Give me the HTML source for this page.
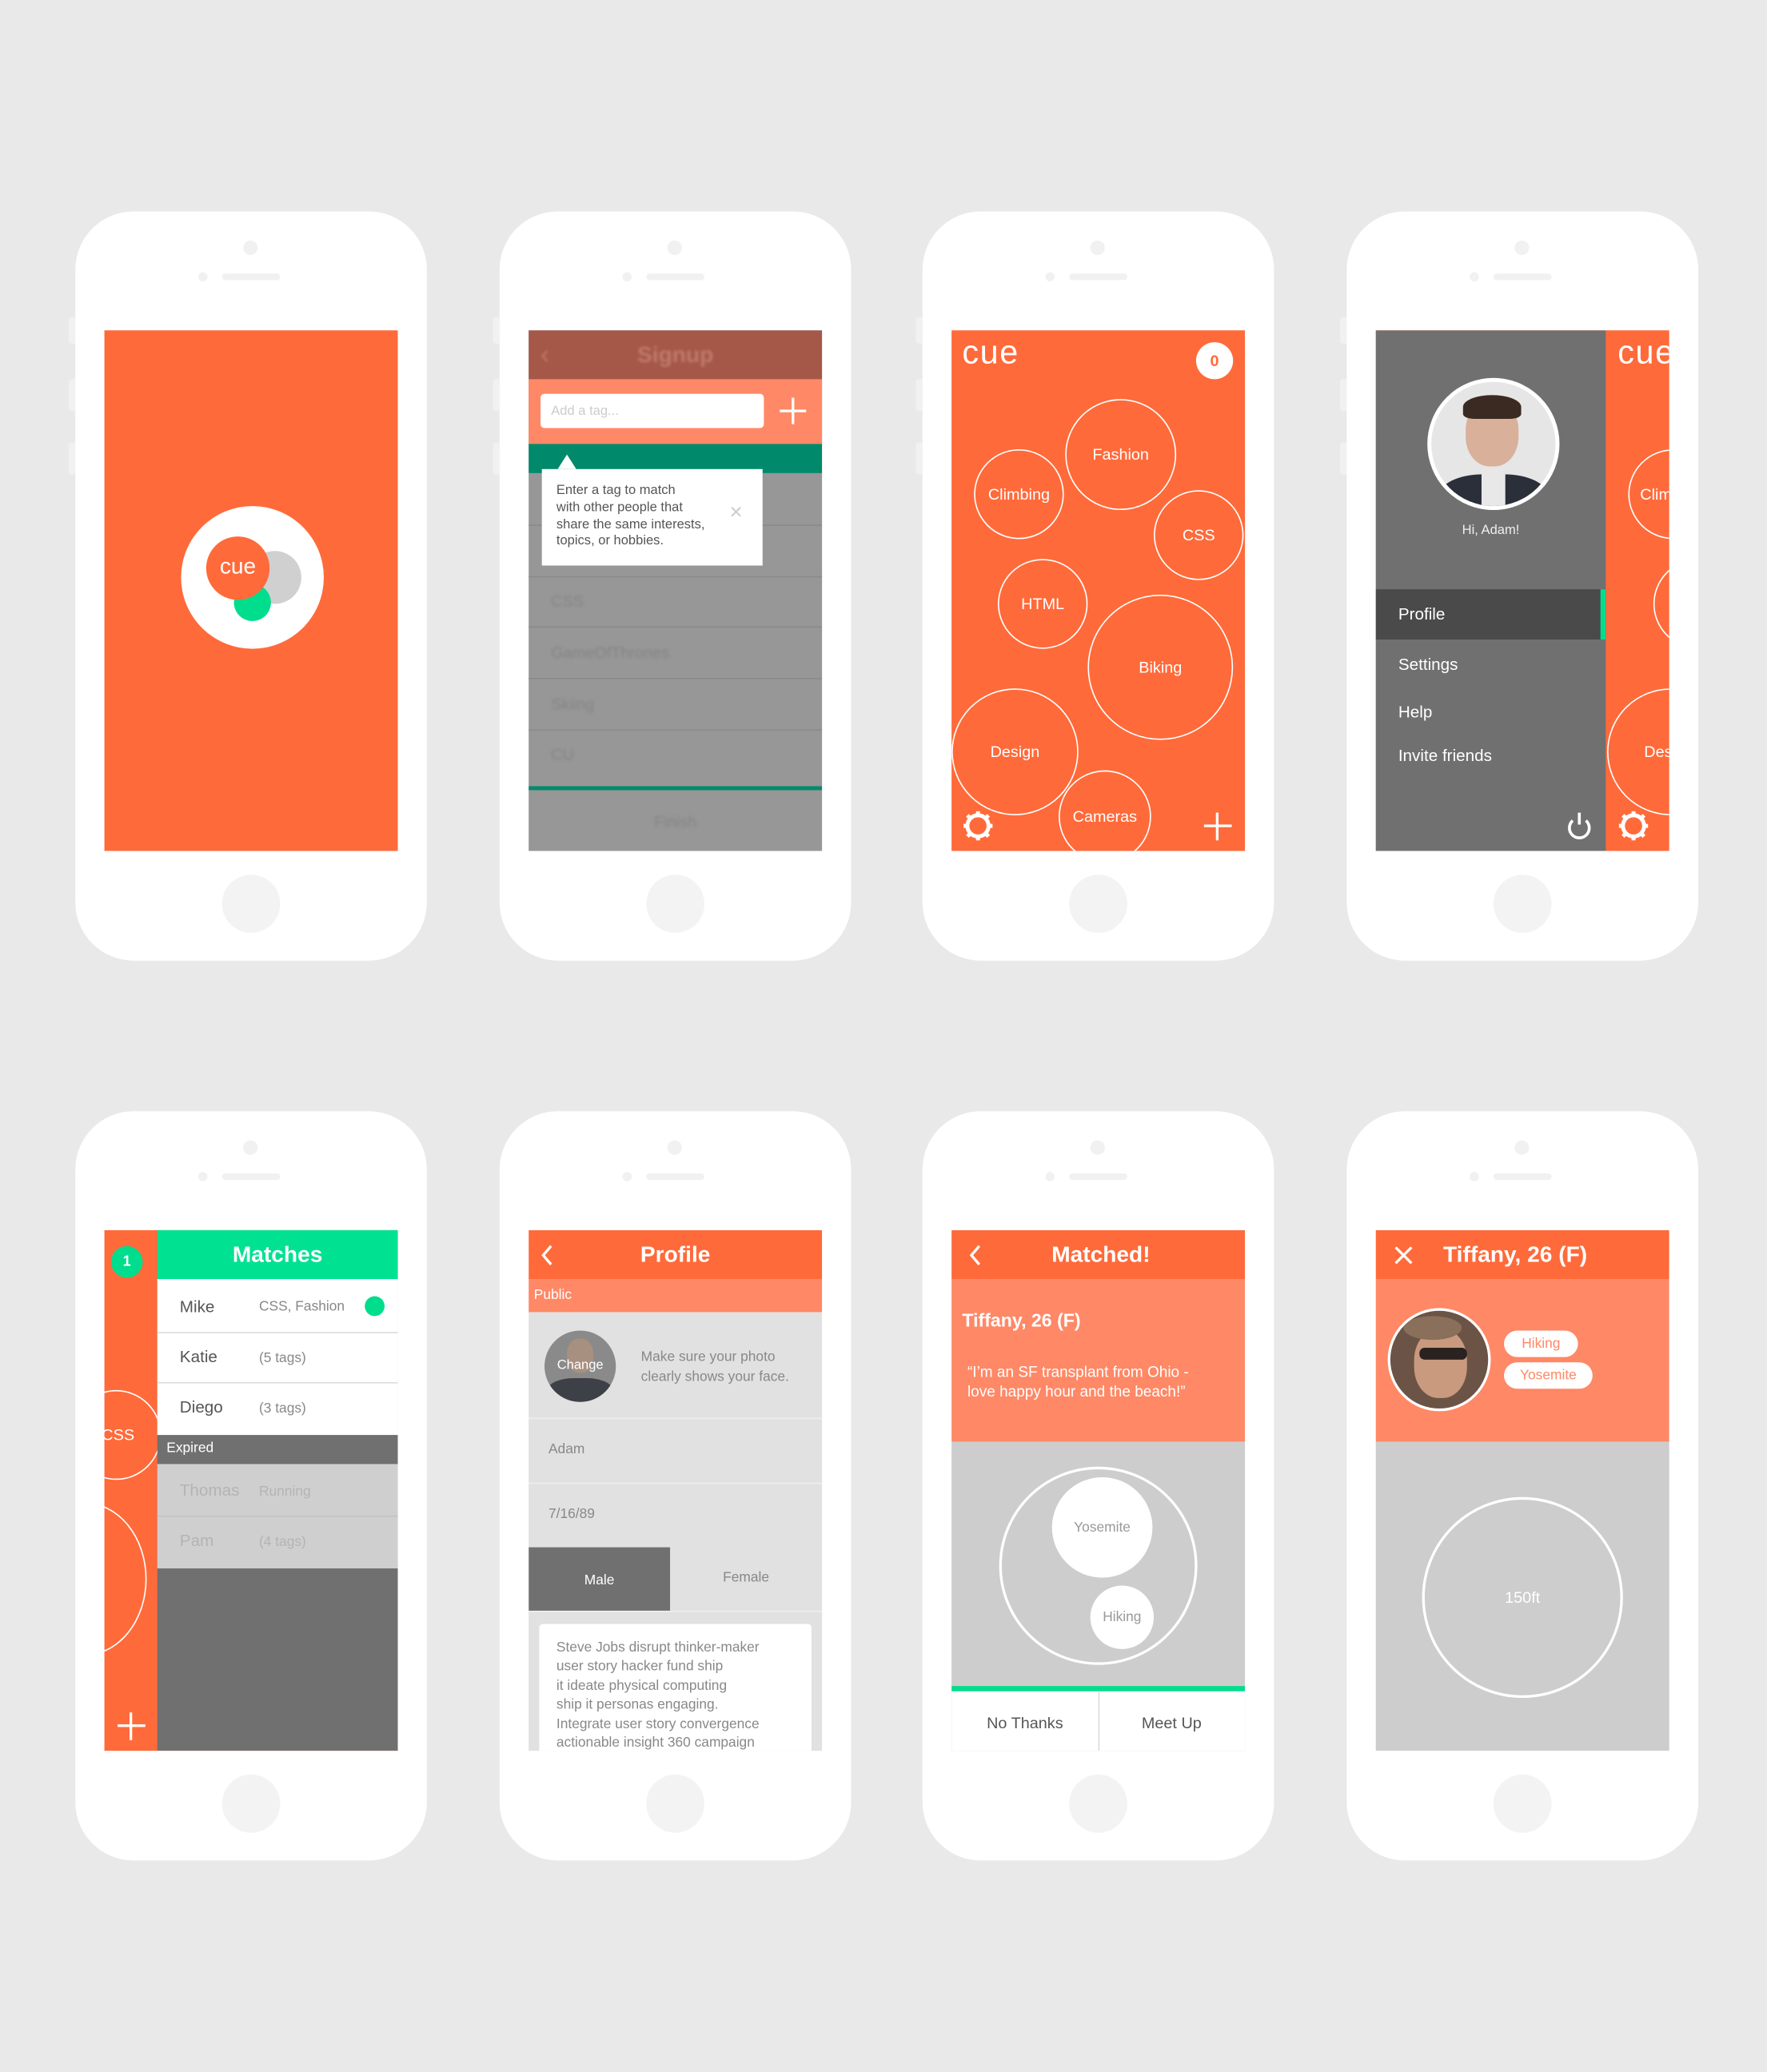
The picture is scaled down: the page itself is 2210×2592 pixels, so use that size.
<!DOCTYPE html>
<html><head><meta charset="utf-8"><style>
*{margin:0;padding:0;box-sizing:border-box}
html,body{width:2210px;height:2592px;overflow:hidden;background:#e9e9e9}
#w{position:absolute;left:0;top:0;width:1337px;height:1568px;transform:scale(1.65295);transform-origin:0 0;font-family:"Liberation Sans",sans-serif}
.ph{position:absolute;width:266px;height:567px;background:#fff;border-radius:44px}
.ph .cam{position:absolute;left:127px;top:22px;width:11px;height:11px;border-radius:50%;background:#f1f1f1}
.ph .d{position:absolute;left:93px;top:46px;width:7px;height:7px;border-radius:50%;background:#f1f1f1}
.ph .sp{position:absolute;left:111px;top:47px;width:44px;height:5px;border-radius:3px;background:#f1f1f1}
.ph .hb{position:absolute;left:111px;top:502px;width:44px;height:44px;border-radius:50%;background:#f3f3f3}
.btn{position:absolute;width:5px;background:#f1f1f1;border-radius:2px 0 0 2px}
.sc{position:absolute;left:22px;top:90px;width:222px;height:394px;overflow:hidden;background:#ff6a3a;font-size:12px}
.a{position:absolute}
.c{position:absolute;border:1px solid #fff;border-radius:50%;color:#fff;display:flex;align-items:center;justify-content:center;font-size:12px}
.t{position:absolute;white-space:nowrap}
</style></head><body><div id="w">

<!-- Row 1 -->
<div class="btn" style="left:52px;top:240px;height:20px"></div><div class="btn" style="left:52px;top:287px;height:24px"></div><div class="btn" style="left:52px;top:335px;height:24px"></div>
<div class="btn" style="left:373px;top:240px;height:20px"></div><div class="btn" style="left:373px;top:287px;height:24px"></div><div class="btn" style="left:373px;top:335px;height:24px"></div>
<div class="btn" style="left:693px;top:240px;height:20px"></div><div class="btn" style="left:693px;top:287px;height:24px"></div><div class="btn" style="left:693px;top:335px;height:24px"></div>
<div class="btn" style="left:1014px;top:240px;height:20px"></div><div class="btn" style="left:1014px;top:287px;height:24px"></div><div class="btn" style="left:1014px;top:335px;height:24px"></div>

<div class="ph" style="left:57px;top:160px"><div class="cam"></div><div class="d"></div><div class="sp"></div><div class="hb"></div>
<div class="sc">
 <div class="a" style="left:58px;top:133px;width:108px;height:108px;border-radius:50%;background:#fff"></div>
 <div class="a" style="left:109px;top:167px;width:40px;height:40px;border-radius:50%;background:#d0d0d0"></div>
 <div class="a" style="left:98px;top:192px;width:28px;height:28px;border-radius:50%;background:#00dd8c"></div>
 <div class="a" style="left:77px;top:156px;width:48px;height:48px;border-radius:50%;background:#ff6a3a;color:#fff;font-size:17px;text-align:center;line-height:46px">cue</div>
</div></div>

<div class="ph" style="left:378px;top:160px"><div class="cam"></div><div class="d"></div><div class="sp"></div><div class="hb"></div>
<div class="sc" style="background:#979797">
 <div class="a" style="left:0;top:0;width:222px;height:37px;background:#a55848"></div>
 <div class="t" style="left:0;width:222px;top:9px;text-align:center;font-weight:bold;font-size:17px;color:#c07a6c;filter:blur(1px)">Signup</div>
 <div class="t" style="left:9px;top:8px;font-size:20px;color:#c07a6c;filter:blur(1px)">&#8249;</div>
 <div class="a" style="left:0;top:37px;width:222px;height:49px;background:#ff8866"></div>
 <div class="a" style="left:9px;top:48px;width:169px;height:26px;background:#fff;border-radius:3px;color:#ccc;font-size:10px;padding:8px 8px">Add a tag...</div>
 <div class="a" style="left:190px;top:60px;width:20px;height:2px;background:#fff"></div>
 <div class="a" style="left:199px;top:51px;width:2px;height:20px;background:#fff"></div>
 <div class="a" style="left:0;top:86px;width:222px;height:22px;background:#00896a"></div>
 <div class="a" style="left:0;top:147px;width:222px;height:1px;background:#8a8a8a"></div>
 <div class="a" style="left:0;top:186px;width:222px;height:1px;background:#8a8a8a"></div>
 <div class="a" style="left:0;top:224px;width:222px;height:1px;background:#8a8a8a"></div>
 <div class="a" style="left:0;top:263px;width:222px;height:1px;background:#8a8a8a"></div>
 <div class="a" style="left:0;top:302px;width:222px;height:1px;background:#8a8a8a"></div>
 <div class="t" style="left:17px;top:198px;color:#858585;filter:blur(1px)">CSS</div>
 <div class="t" style="left:17px;top:237px;color:#858585;filter:blur(1px)">GameOfThrones</div>
 <div class="t" style="left:17px;top:276px;color:#858585;filter:blur(1px)">Skiing</div>
 <div class="t" style="left:17px;top:314px;color:#858585;filter:blur(1px)">CU</div>
 <div class="a" style="left:0;top:345px;width:222px;height:3px;background:#008a6a"></div>
 <div class="t" style="left:0;width:222px;text-align:center;top:365px;color:#858585;filter:blur(1px)">Finish</div>
 <div class="a" style="left:22px;top:94px;width:0;height:0;border-left:7px solid transparent;border-right:7px solid transparent;border-bottom:11px solid #fff"></div>
 <div class="a" style="left:10px;top:105px;width:167px;height:73px;background:#fff"></div>
 <div class="t" style="left:21px;top:116px;font-size:10px;line-height:12.8px;color:#555">Enter a tag to match<br>with other people that<br>share the same interests,<br>topics, or hobbies.</div>
 <div class="t" style="left:152px;top:128px;font-size:17px;color:#ccc;font-weight:100">&#215;</div>
</div></div>

<div class="ph" style="left:698px;top:160px"><div class="cam"></div><div class="d"></div><div class="sp"></div><div class="hb"></div>
<div class="sc">
 <div class="t" style="left:8px;top:3px;font-size:25px;color:#fff;letter-spacing:1px">cue</div>
 <div class="a" style="left:185px;top:9px;width:28px;height:28px;border-radius:50%;background:#fff;color:#ff6a3a;font-weight:bold;text-align:center;line-height:28px;font-size:12px">0</div>
 <div class="c" style="left:86px;top:52px;width:84px;height:84px">Fashion</div>
 <div class="c" style="left:17px;top:90px;width:68px;height:68px">Climbing</div>
 <div class="c" style="left:153px;top:121px;width:68px;height:68px">CSS</div>
 <div class="c" style="left:35px;top:173px;width:68px;height:68px">HTML</div>
 <div class="c" style="left:103px;top:200px;width:110px;height:110px">Biking</div>
 <div class="c" style="left:0;top:271px;width:96px;height:96px">Design</div>
 <div class="c" style="left:81px;top:333px;width:70px;height:70px;padding-bottom:0">Cameras</div>
 <svg class="a" style="left:8px;top:363px" width="24" height="24" viewBox="0 0 24 24"><circle cx="12" cy="12" r="8" fill="none" stroke="#fff" stroke-width="3"/><g stroke="#fff" stroke-width="3"><line x1="12" y1="1" x2="12" y2="5"/><line x1="12" y1="19" x2="12" y2="23"/><line x1="1" y1="12" x2="5" y2="12"/><line x1="19" y1="12" x2="23" y2="12"/><line x1="4" y1="4" x2="7" y2="7"/><line x1="17" y1="17" x2="20" y2="20"/><line x1="4" y1="20" x2="7" y2="17"/><line x1="17" y1="7" x2="20" y2="4"/></g></svg>
 <div class="a" style="left:191px;top:374px;width:21px;height:2px;background:#fff"></div>
 <div class="a" style="left:200px;top:365px;width:2px;height:21px;background:#fff"></div>
</div></div>

<div class="ph" style="left:1019px;top:160px"><div class="cam"></div><div class="d"></div><div class="sp"></div><div class="hb"></div>
<div class="sc">
 <div class="t" style="left:183px;top:3px;font-size:25px;color:#fff;letter-spacing:1px">cue</div>
 <div class="c" style="left:191px;top:90px;width:68px;height:68px;justify-content:flex-start;padding-left:8px">Clim</div>
 <div class="c" style="left:210px;top:173px;width:68px;height:68px"></div>
 <div class="c" style="left:175px;top:271px;width:96px;height:96px;justify-content:flex-start;padding-left:27px">Des</div>
 <svg class="a" style="left:183px;top:363px" width="24" height="24" viewBox="0 0 24 24"><circle cx="12" cy="12" r="8" fill="none" stroke="#fff" stroke-width="3"/><g stroke="#fff" stroke-width="3"><line x1="12" y1="1" x2="12" y2="5"/><line x1="12" y1="19" x2="12" y2="23"/><line x1="1" y1="12" x2="5" y2="12"/><line x1="19" y1="12" x2="23" y2="12"/><line x1="4" y1="4" x2="7" y2="7"/><line x1="17" y1="17" x2="20" y2="20"/><line x1="4" y1="20" x2="7" y2="17"/><line x1="17" y1="7" x2="20" y2="4"/></g></svg>
 <div class="a" style="left:0;top:0;width:174px;height:394px;background:#707070"></div>
 <div class="a" style="left:39px;top:36px;width:100px;height:100px;border-radius:50%;background:#e6e6e6;border:3px solid #fff;overflow:hidden">
  <div class="a" style="left:26px;top:14px;width:40px;height:50px;border-radius:45%;background:#d9b09a"></div>
  <div class="a" style="left:24px;top:10px;width:44px;height:18px;border-radius:50% 50% 20% 20%;background:#3a2a22"></div>
  <div class="a" style="left:6px;top:70px;width:82px;height:40px;border-radius:40% 40% 0 0;background:#2b2f3a"></div>
  <div class="a" style="left:38px;top:66px;width:18px;height:30px;background:#e8e8e8"></div>
 </div>
 <div class="t" style="left:0;width:174px;text-align:center;top:146px;font-size:10px;color:#eee">Hi, Adam!</div>
 <div class="a" style="left:0;top:196px;width:174px;height:38px;background:#4a4a4a"></div>
 <div class="a" style="left:170px;top:196px;width:4px;height:38px;background:#00dd8c"></div>
 <div class="t" style="left:17px;top:208px;font-size:12.5px;color:#fff">Profile</div>
 <div class="t" style="left:17px;top:246px;font-size:12.5px;color:#fff">Settings</div>
 <div class="t" style="left:17px;top:282px;font-size:12.5px;color:#fff">Help</div>
 <div class="t" style="left:17px;top:315px;font-size:12.5px;color:#fff">Invite friends</div>
 <svg class="a" style="left:144px;top:364px" width="20" height="22" viewBox="0 0 20 22"><path d="M5 7 A7.5 7.5 0 1 0 15 7" fill="none" stroke="#fff" stroke-width="2.2"/><line x1="10" y1="1" x2="10" y2="10" stroke="#fff" stroke-width="2.2"/></svg>
</div></div>

<!-- Row 2 -->
<div class="ph" style="left:57px;top:841px"><div class="cam"></div><div class="d"></div><div class="sp"></div><div class="hb"></div>
<div class="sc">
 <div class="c" style="left:-25px;top:121px;width:68px;height:68px;justify-content:flex-start;padding-left:22px">CSS</div>
 <div class="c" style="left:-62px;top:206px;width:94px;height:116px"></div>
 <div class="a" style="left:5px;top:12px;width:24px;height:24px;border-radius:50%;background:#00dd8c;color:#fff;font-weight:bold;font-size:11px;text-align:center;line-height:24px">1</div>
 <div class="a" style="left:10px;top:374px;width:21px;height:2px;background:#fff"></div>
 <div class="a" style="left:19px;top:365px;width:2px;height:21px;background:#fff"></div>
 <div class="a" style="left:40px;top:0;width:182px;height:394px;background:#707070"></div>
 <div class="a" style="left:40px;top:0;width:182px;height:37px;background:#00e291;color:#fff;font-weight:bold;font-size:17px;text-align:center;line-height:37px">Matches</div>
 <div class="a" style="left:40px;top:37px;width:182px;height:118px;background:#fff"></div>
 <div class="a" style="left:40px;top:77px;width:182px;height:1px;background:#ddd"></div>
 <div class="a" style="left:40px;top:115px;width:182px;height:1px;background:#ddd"></div>
 <div class="t" style="left:57px;top:51px;font-size:12.5px;color:#555">Mike</div>
 <div class="t" style="left:117px;top:52px;font-size:10.5px;color:#888">CSS, Fashion</div>
 <div class="a" style="left:197px;top:50px;width:15px;height:15px;border-radius:50%;background:#00dd8c"></div>
 <div class="t" style="left:57px;top:89px;font-size:12.5px;color:#555">Katie</div>
 <div class="t" style="left:117px;top:91px;font-size:10.5px;color:#888">(5 tags)</div>
 <div class="t" style="left:57px;top:127px;font-size:12.5px;color:#555">Diego</div>
 <div class="t" style="left:117px;top:129px;font-size:10.5px;color:#888">(3 tags)</div>
 <div class="t" style="left:47px;top:159px;font-size:10.5px;color:#fff">Expired</div>
 <div class="a" style="left:40px;top:177px;width:182px;height:79px;background:#cfcfcf"></div>
 <div class="a" style="left:40px;top:216px;width:182px;height:1px;background:#c2c2c2"></div>
 <div class="t" style="left:57px;top:190px;font-size:12.5px;color:#b4b4b4">Thomas</div>
 <div class="t" style="left:117px;top:192px;font-size:10.5px;color:#b4b4b4">Running</div>
 <div class="t" style="left:57px;top:228px;font-size:12.5px;color:#b4b4b4">Pam</div>
 <div class="t" style="left:117px;top:230px;font-size:10.5px;color:#b4b4b4">(4 tags)</div>
</div></div>

<div class="ph" style="left:378px;top:841px"><div class="cam"></div><div class="d"></div><div class="sp"></div><div class="hb"></div>
<div class="sc" style="background:#e1e1e1">
 <div class="a" style="left:0;top:0;width:222px;height:37px;background:#ff6a3a;color:#fff;font-weight:bold;font-size:17px;text-align:center;line-height:37px">Profile</div>
 <svg class="a" style="left:8px;top:10px" width="12" height="18" viewBox="0 0 12 18"><path d="M9 2 L3 9 L9 16" fill="none" stroke="#fff" stroke-width="2"/></svg>
 <div class="a" style="left:0;top:37px;width:222px;height:25px;background:#ff8866;color:#fff;font-size:10.5px;padding:6px 4px">Public</div>
 <div class="a" style="left:12px;top:76px;width:54px;height:54px;border-radius:50%;background:#8a8a8a;overflow:hidden">
  <div class="a" style="left:17px;top:6px;width:20px;height:26px;border-radius:45%;background:#a89080"></div>
  <div class="a" style="left:2px;top:36px;width:50px;height:24px;border-radius:40% 40% 0 0;background:#3e4048"></div>
  <div class="t" style="left:0;width:54px;text-align:center;top:21px;color:#fff;font-size:10px">Change</div>
 </div>
 <div class="t" style="left:85px;top:89px;font-size:10.5px;line-height:15px;color:#888">Make sure your photo<br>clearly shows your face.</div>
 <div class="a" style="left:0;top:142px;width:222px;height:1px;background:#eee"></div>
 <div class="a" style="left:0;top:191px;width:222px;height:1px;background:#eee"></div>
 <div class="t" style="left:15px;top:160px;font-size:10.5px;color:#888">Adam</div>
 <div class="t" style="left:15px;top:209px;font-size:10.5px;color:#888">7/16/89</div>
 <div class="a" style="left:0;top:240px;width:107px;height:48px;background:#707070;color:#fff;font-size:10.5px;text-align:center;line-height:50px">Male</div>
 <div class="t" style="left:107px;width:115px;text-align:center;top:257px;font-size:10.5px;color:#888">Female</div>
 <div class="a" style="left:0;top:288px;width:222px;height:1px;background:#eee"></div>
 <div class="a" style="left:8px;top:298px;width:206px;height:110px;background:#fff;border-radius:3px"></div>
 <div class="t" style="left:21px;top:309px;font-size:10.5px;line-height:14.4px;color:#888">Steve Jobs disrupt thinker-maker<br>user story hacker fund ship<br>it ideate physical computing<br>ship it personas engaging.<br>Integrate user story convergence<br>actionable insight 360 campaign</div>
</div></div>

<div class="ph" style="left:698px;top:841px"><div class="cam"></div><div class="d"></div><div class="sp"></div><div class="hb"></div>
<div class="sc" style="background:#cdcdcd">
 <div class="a" style="left:0;top:0;width:222px;height:37px;background:#ff6a3a;color:#fff;font-weight:bold;font-size:17px;text-align:center;line-height:37px;padding-left:4px">Matched!</div>
 <svg class="a" style="left:12px;top:10px" width="12" height="18" viewBox="0 0 12 18"><path d="M9 2 L3 9 L9 16" fill="none" stroke="#fff" stroke-width="2"/></svg>
 <div class="a" style="left:0;top:37px;width:222px;height:123px;background:#ff8866"></div>
 <div class="t" style="left:8px;top:60px;color:#fff;font-weight:bold;font-size:14px">Tiffany, 26 (F)</div>
 <div class="t" style="left:12px;top:101px;color:#fff;font-size:11.5px;line-height:15px">“I’m an SF transplant from Ohio -<br>love happy hour and the beach!”</div>
 <div class="a" style="left:36px;top:179px;width:150px;height:150px;border-radius:50%;border:2px solid #fff"></div>
 <div class="a" style="left:76px;top:187px;width:76px;height:76px;border-radius:50%;background:#fff;color:#999;font-size:10.5px;text-align:center;line-height:76px">Yosemite</div>
 <div class="a" style="left:105px;top:269px;width:48px;height:48px;border-radius:50%;background:#fff;color:#999;font-size:10.5px;text-align:center;line-height:48px">Hiking</div>
 <div class="a" style="left:0;top:345px;width:222px;height:4px;background:#00dd8c"></div>
 <div class="a" style="left:0;top:349px;width:222px;height:45px;background:#fff"></div>
 <div class="a" style="left:111px;top:349px;width:1px;height:45px;background:#ddd"></div>
 <div class="t" style="left:0;width:111px;text-align:center;top:366px;color:#555;font-size:12px">No Thanks</div>
 <div class="t" style="left:111px;width:111px;text-align:center;top:366px;color:#555;font-size:12px">Meet Up</div>
</div></div>

<div class="ph" style="left:1019px;top:841px"><div class="cam"></div><div class="d"></div><div class="sp"></div><div class="hb"></div>
<div class="sc" style="background:#cdcdcd">
 <div class="a" style="left:0;top:0;width:222px;height:37px;background:#ff6a3a;color:#fff;font-weight:bold;font-size:17px;line-height:37px;padding-left:51px">Tiffany, 26 (F)</div>
 <svg class="a" style="left:13px;top:11px" width="16" height="16" viewBox="0 0 16 16"><path d="M2 2 L14 14 M14 2 L2 14" stroke="#fff" stroke-width="2"/></svg>
 <div class="a" style="left:0;top:37px;width:222px;height:123px;background:#ff8866"></div>
 <div class="a" style="left:9px;top:59px;width:78px;height:78px;border-radius:50%;border:2px solid #fff;background:#6b5446;overflow:hidden">
  <div class="a" style="left:18px;top:14px;width:40px;height:52px;border-radius:45%;background:#c99a7e"></div>
  <div class="a" style="left:22px;top:28px;width:36px;height:9px;border-radius:4px;background:#2a2220"></div>
  <div class="a" style="left:10px;top:4px;width:44px;height:18px;border-radius:50%;background:#8a6f5a"></div>
 </div>
 <div class="a" style="left:97px;top:76px;width:56px;height:20px;border-radius:10px;background:#fff;color:#ff8866;font-size:10.5px;text-align:center;line-height:20px">Hiking</div>
 <div class="a" style="left:97px;top:100px;width:67px;height:20px;border-radius:10px;background:#fff;color:#ff8866;font-size:10.5px;text-align:center;line-height:20px">Yosemite</div>
 <div class="a" style="left:35px;top:202px;width:152px;height:152px;border-radius:50%;border:2px solid #fff;color:#fff;font-size:12px;text-align:center;line-height:148px">150ft</div>
</div></div>

</div></body></html>
